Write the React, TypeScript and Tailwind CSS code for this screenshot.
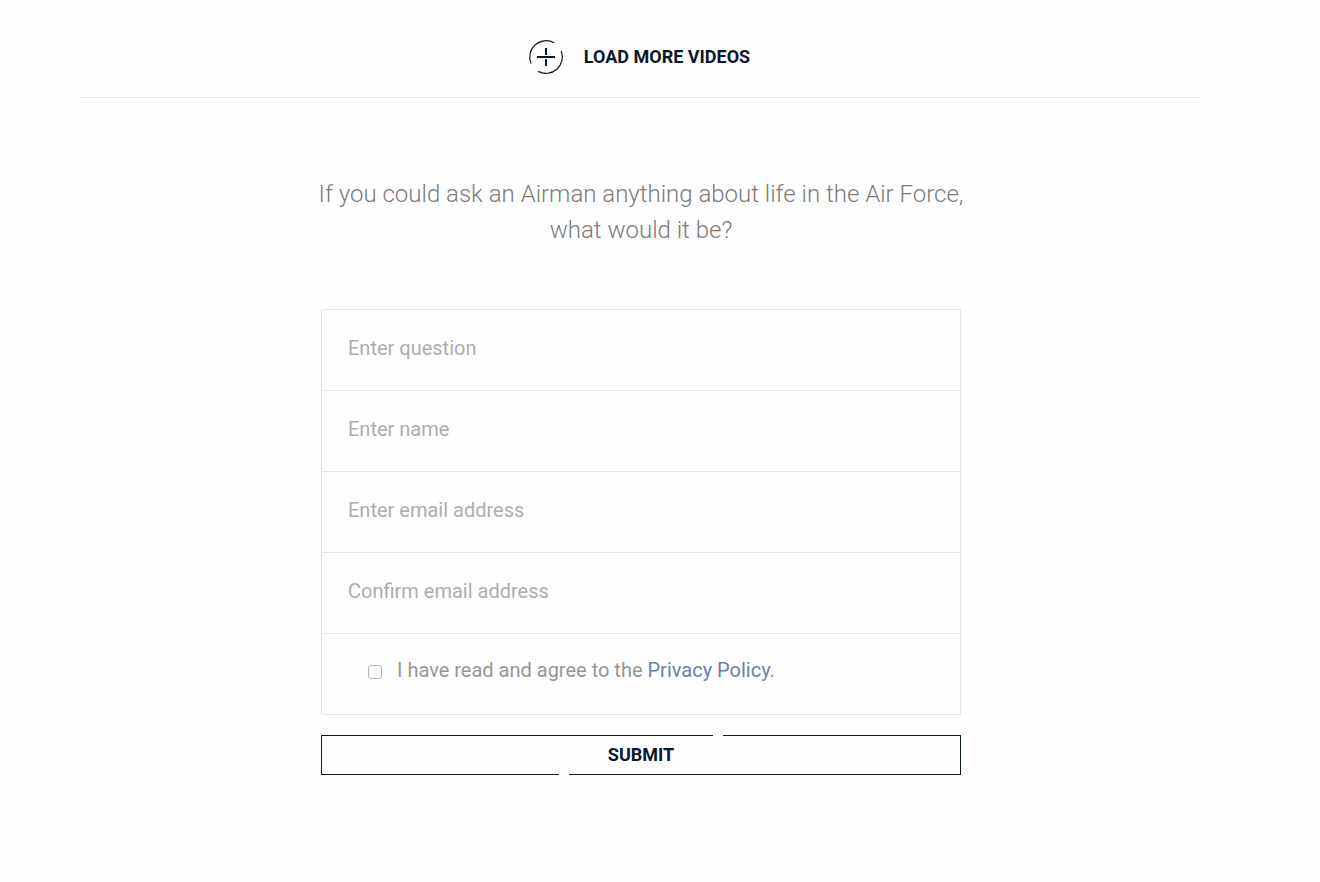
const fields = [
  { id: "question", label: "Enter question", type: "text" },
  { id: "name", label: "Enter name", type: "text" },
  { id: "email", label: "Enter email address", type: "email" },
  { id: "confirm-email", label: "Confirm email address", type: "email" },
]

function PlusCircle() {
  return (
    <svg width="36" height="36" viewBox="0 0 36 36" fill="none" stroke="currentColor" aria-hidden="true">
      <path d="M3.1 24.6A16.4 16.4 0 0 1 26.2 3.8" strokeWidth="1.2" />
      <path d="M33.2 11.9A16.4 16.4 0 0 1 10.2 32.4" strokeWidth="1.2" />
      <path d="M9 18H27" strokeWidth="2" />
      <path d="M18 9V16M18 20V27" strokeWidth="2" />
    </svg>
  )
}

function SubmitButton() {
  return (
    <button
      type="submit"
      className="relative mt-5 h-10 w-full border border-[#0b172b] text-lg font-bold text-[#0b172b]"
    >
      SUBMIT
      <span className="absolute -top-px right-[237px] h-px w-2.5 bg-[#fefefe]" />
      <span className="absolute -bottom-px left-[237px] h-px w-2.5 bg-[#fefefe]" />
    </button>
  )
}

export default function App() {
  return (
    <div className="min-h-screen bg-[#fefefe] pr-[38px] font-['Roboto',sans-serif]">
      <main className="mx-auto max-w-[1120px]">
        <div className="flex h-[98px] items-center justify-center border-b border-[#e4e5e7] pt-4 pr-1">
          <button type="button" className="flex items-center gap-5 text-lg font-bold text-[#0b172b]">
            <PlusCircle />
            LOAD MORE VIDEOS
          </button>
        </div>

        <h2 className="mx-auto mt-[78px] max-w-[680px] text-center text-2xl leading-9 font-light text-[#7b7b7b]">
          If you could ask an Airman anything about life in the Air Force, what would it be?
        </h2>

        <form className="mx-auto mt-[61px] max-w-[640px]" onSubmit={(e) => e.preventDefault()}>
          <div className="divide-y divide-[#e4e5e7] border border-[#e4e5e7]">
            {fields.map((field) => (
              <input
                key={field.id}
                id={field.id}
                type={field.type}
                aria-label={field.label}
                placeholder={field.label}
                className="block h-[81px] w-full bg-transparent px-[26px] pb-1 text-xl text-[#7b7b7b] outline-none placeholder:text-[#adadad]"
              />
            ))}
            <div className="flex h-20 items-center pb-2 pl-[46px] text-xl text-[#969696]">
              <input
                id="agree"
                type="checkbox"
                className="mt-1 mr-[15px] size-3.5 appearance-none rounded-[3px] border border-[#b8b8b8] bg-white checked:bg-[#5f7ba3]"
              />
              <label htmlFor="agree">
                I have read and agree to the{" "}
                <a href="#privacy" className="text-[#6883a9]">
                  Privacy Policy
                </a>
                .
              </label>
            </div>
          </div>
          <SubmitButton />
        </form>
      </main>
    </div>
  )
}
